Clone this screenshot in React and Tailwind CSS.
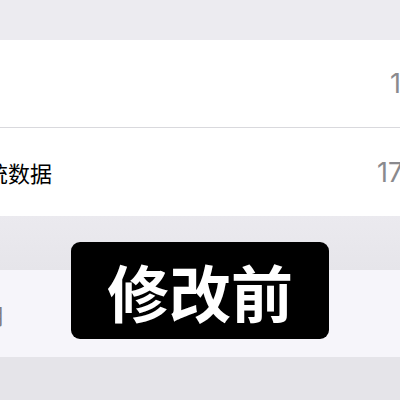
export default function App() {
  return (
    <div
      className="relative w-[400px] h-[400px] overflow-hidden bg-[#ecebf0]"
      style={{ fontFamily: '"Noto Sans CJK SC", "Noto Sans", sans-serif' }}
    >
      <div className="h-[40px] bg-[#ecebf0]" />
      <div className="bg-white">
        <div className="h-[87px] flex items-center">
          <div className="ml-auto w-[10px] whitespace-nowrap text-[27px] leading-none text-[#8a8a8e] font-['Inter',sans-serif]">
            14.2 GB
          </div>
        </div>
        <div className="h-[1px] bg-[#d9d9dd]" />
        <div className="h-[88px] flex items-center">
          <div className="ml-[-36px] whitespace-nowrap text-[22px] leading-none text-black">
            系统数据
          </div>
          <div className="ml-auto w-[23px] whitespace-nowrap text-[27px] leading-none text-[#8a8a8e] font-['Inter',sans-serif]">
            17.4 GB
          </div>
        </div>
      </div>
      <div className="h-[54px] bg-gradient-to-b from-[#ebeaef] to-[#e6e5ea]" />
      <div className="h-[87px] bg-[#f6f5fa] flex items-center">
        <div className="ml-[-40px] whitespace-nowrap text-[22px] leading-none text-[#7c7c80]">
          已用
        </div>
      </div>
      <div className="h-[43px] bg-[#e5e4e9]" />

      <div className="absolute left-[71px] top-[242px] w-[258px] h-[97px] bg-black rounded-[9px] flex items-center justify-center">
        <span className="text-white text-[62px] font-bold leading-none">修改前</span>
      </div>
    </div>
  );
}
